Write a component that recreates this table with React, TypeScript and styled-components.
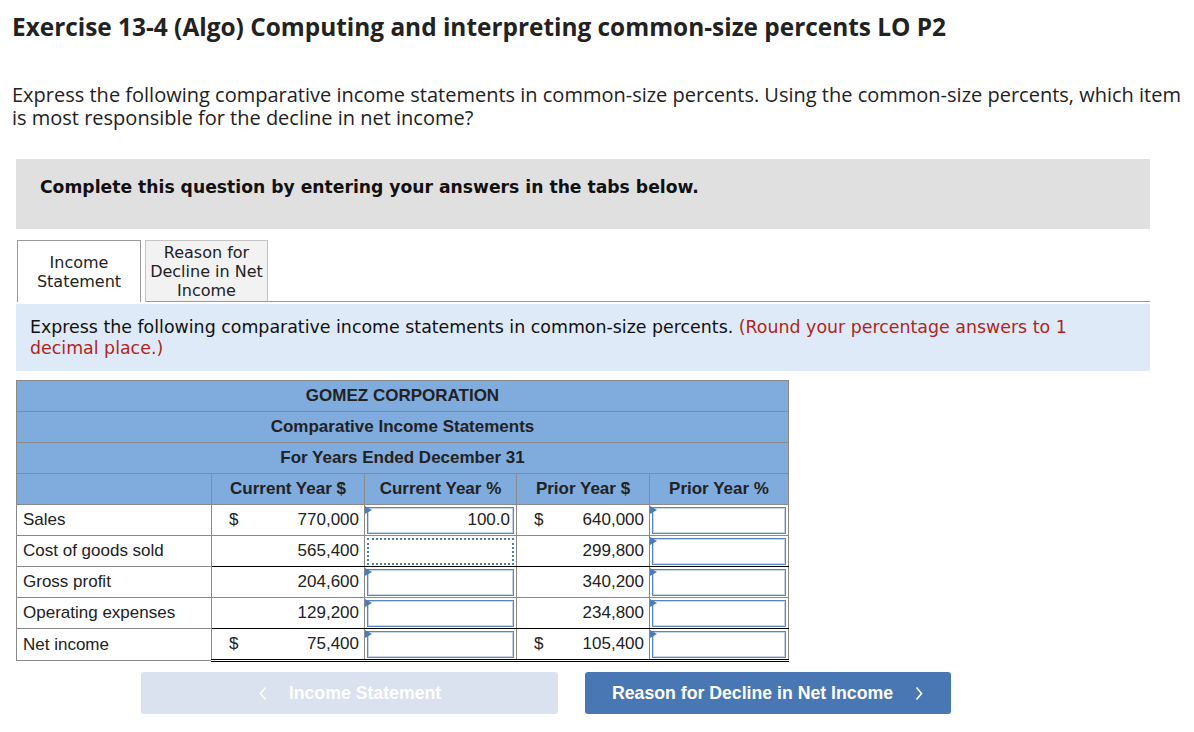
import React from "react";
import styled, { createGlobalStyle } from "styled-components";

const Global = createGlobalStyle`
  html, body { margin: 0; padding: 0; background: #fff; }
  body { font-family: "Liberation Sans", Arial, sans-serif; color: #222; }
`;

const Page = styled.div`
  width: 1194px;
  padding: 0 0 20px 0;
`;

const Title = styled.h1`
  margin: 0;
  padding: 12px 0 0 12px;
  font-family: "Open Sans", "Lato", sans-serif;
  font-weight: 700;
  font-size: 24.4px;
  line-height: 30px;
  color: #222;
`;

const Intro = styled.p`
  margin: 41px 0 0 0;
  padding: 0 4px 0 12px;
  font-family: "Open Sans", "Lato", sans-serif;
  font-size: 20px;
  line-height: 23px;
  color: #222;
`;

const Body = styled.div`
  padding: 0 44px 0 16px;
`;

const Notice = styled.div`
  margin-top: 30px;
  height: 70px;
  background: #e0e0e0;
  display: flex;
  align-items: center;
  padding: 0 24px 14px 24px;
  font-family: "DejaVu Sans", Verdana, sans-serif;
  font-weight: 700;
  font-size: 17.2px;
  color: #111;
  box-sizing: border-box;
`;

const TabBar = styled.div`
  display: flex;
  align-items: flex-end;
  margin-top: 11px;
  gap: 4px;
`;

const Tab = styled.div<{ $active?: boolean }>`
  width: ${(p) => (p.$active ? 124 : 123)}px;
  height: 62px;
  box-sizing: border-box;
  display: flex;
  align-items: center;
  justify-content: center;
  text-align: center;
  font-family: "DejaVu Sans", Verdana, sans-serif;
  font-size: 16px;
  line-height: 19px;
  color: #222;
  margin-left: ${(p) => (p.$active ? 1 : 0)}px;
  background: ${(p) => (p.$active ? "#fff" : "#f2f2f2")};
  border: 1px solid ${(p) => (p.$active ? "#9a9a9a" : "#c4c4c4")};
  border-bottom: ${(p) => (p.$active ? "none" : "1px solid #9a9a9a")};
`;

const TabFill = styled.div`
  flex: 1;
  border-bottom: 1px solid #9a9a9a;
  margin-left: -4px;
`;

const Instruction = styled.div`
  margin-top: 2px;
  background: #deeaf7;
  padding: 13px 14px 12px 14px;
  font-family: "DejaVu Sans", Verdana, sans-serif;
  font-size: 17.4px;
  line-height: 21px;
  color: #111;
`;

const Red = styled.span`
  color: #b0251c;
`;

const Table = styled.table`
  margin-top: 9px;
  border-collapse: collapse;
  width: 772px;
  table-layout: fixed;
  font-family: "Liberation Sans", Arial, sans-serif;
  font-size: 17px;
  color: #222;
  border: 1px solid #8a8a8a;
`;

const HeadCell = styled.th`
  background: #7fabdd;
  border: 1px solid #8a8a8a;
  height: 30px;
  padding: 0;
  font-weight: 700;
  text-align: center;
  color: #222;
`;

const LabelCell = styled.td`
  border: 1px solid #8a8a8a;
  height: 30px;
  padding: 0 6px;
  text-align: left;
`;

const ruleBorder = (r?: "single" | "double") =>
  r === "single" ? "1px solid #000" : r === "double" ? "3px double #000" : "1px solid #8a8a8a";

const AmountCell = styled.td<{ $rule?: "single" | "double" }>`
  border: 1px solid #8a8a8a;
  border-bottom: ${(p) => ruleBorder(p.$rule)};
  height: 30px;
  padding: 0 5px 0 17px;
`;

const Amount = styled.div`
  display: flex;
  justify-content: space-between;
  align-items: center;
`;

const InputCell = styled.td<{ $rule?: "single" | "double" }>`
  border: 1px solid #8a8a8a;
  border-bottom: ${(p) => ruleBorder(p.$rule)};
  height: 30px;
  padding: 0 2px;
  position: relative;
`;

const InputBox = styled.div<{ $focused?: boolean }>`
  height: 27px;
  box-sizing: border-box;
  background: #fff;
  border: ${(p) => (p.$focused ? "2px dotted #4a7cbc" : "1px solid #5a86c0")};
  box-shadow: ${(p) => (p.$focused ? "none" : "inset 0 0 0 1px #c9d6e8")};
  display: flex;
  align-items: center;
  justify-content: flex-end;
  padding-right: 3px;
  color: #222;
`;

const Flag = styled.span`
  position: absolute;
  left: 0;
  top: 1px;
  width: 0;
  height: 0;
  border-top: 4.5px solid transparent;
  border-bottom: 4.5px solid transparent;
  border-left: 7px solid #4a7cbc;
`;

const Nav = styled.div`
  display: flex;
  gap: 27px;
  padding-left: 141px;
  margin-top: 10px;
`;

const NavButton = styled.div<{ $primary?: boolean; $w: number }>`
  width: ${(p) => p.$w}px;
  height: 42px;
  border-radius: 3px;
  background: ${(p) => (p.$primary ? "#4977b4" : "#d9e2ee")};
  color: #fff;
  display: flex;
  align-items: center;
  justify-content: center;
  gap: 21px;
  font-family: "Liberation Sans", Arial, sans-serif;
  font-weight: 700;
  font-size: 17.7px;
`;

const Chevron = styled.svg`
  width: 10px;
  height: 15px;
`;

type Rule = "single" | "double" | undefined;

interface Row {
  label: string;
  cur: string;
  prior: string;
  dollar?: boolean;
  curPct?: string;
  focused?: boolean;
  rule?: Rule;
}

const rows: Row[] = [
  { label: "Sales", cur: "770,000", prior: "640,000", dollar: true, curPct: "100.0" },
  { label: "Cost of goods sold", cur: "565,400", prior: "299,800", focused: true, rule: "single" },
  { label: "Gross profit", cur: "204,600", prior: "340,200" },
  { label: "Operating expenses", cur: "129,200", prior: "234,800", rule: "single" },
  { label: "Net income", cur: "75,400", prior: "105,400", dollar: true, rule: "double" },
];

export default function App() {
  return (
    <Page>
      <Global />
      <Title>Exercise 13-4 (Algo) Computing and interpreting common-size percents LO P2</Title>
      <Intro>
        Express the following comparative income statements in common-size percents. Using the common-size percents, which item
        <br />
        is most responsible for the decline in net income?
      </Intro>
      <Body>
        <Notice>Complete this question by entering your answers in the tabs below.</Notice>
        <TabBar>
          <Tab $active>
            Income
            <br />
            Statement
          </Tab>
          <Tab>
            Reason for
            <br />
            Decline in Net
            <br />
            Income
          </Tab>
          <TabFill />
        </TabBar>
        <Instruction>
          Express the following comparative income statements in common-size percents.{" "}
          <Red>(Round your percentage answers to 1</Red>
          <br />
          <Red>decimal place.)</Red>
        </Instruction>
        <Table>
          <colgroup>
            <col style={{ width: 195 }} />
            <col style={{ width: 153 }} />
            <col style={{ width: 152 }} />
            <col style={{ width: 133 }} />
            <col style={{ width: 139 }} />
          </colgroup>
          <thead>
            <tr>
              <HeadCell colSpan={5}>GOMEZ CORPORATION</HeadCell>
            </tr>
            <tr>
              <HeadCell colSpan={5}>Comparative Income Statements</HeadCell>
            </tr>
            <tr>
              <HeadCell colSpan={5}>For Years Ended December 31</HeadCell>
            </tr>
            <tr>
              <HeadCell />
              <HeadCell>Current Year $</HeadCell>
              <HeadCell>Current Year %</HeadCell>
              <HeadCell>Prior Year $</HeadCell>
              <HeadCell>Prior Year %</HeadCell>
            </tr>
          </thead>
          <tbody>
            {rows.map((r) => (
              <tr key={r.label}>
                <LabelCell>{r.label}</LabelCell>
                <AmountCell $rule={r.rule}>
                  <Amount>
                    <span>{r.dollar ? "$" : ""}</span>
                    <span>{r.cur}</span>
                  </Amount>
                </AmountCell>
                <InputCell $rule={r.rule}>
                  <InputBox $focused={r.focused}>{r.curPct ?? ""}</InputBox>
                  {!r.focused && <Flag />}
                </InputCell>
                <AmountCell $rule={r.rule}>
                  <Amount>
                    <span>{r.dollar ? "$" : ""}</span>
                    <span>{r.prior}</span>
                  </Amount>
                </AmountCell>
                <InputCell $rule={r.rule}>
                  <InputBox />
                  <Flag />
                </InputCell>
              </tr>
            ))}
          </tbody>
        </Table>
      </Body>
      <Nav>
        <NavButton $w={417}>
          <Chevron viewBox="0 0 10 15">
            <path d="M7.5 1.5 L2.5 7.5 L7.5 13.5" fill="none" stroke="#fff" strokeWidth="1.6" />
          </Chevron>
          <span>Income Statement</span>
        </NavButton>
        <NavButton $primary $w={366}>
          <span>Reason for Decline in Net Income</span>
          <Chevron viewBox="0 0 10 15">
            <path d="M2.5 1.5 L7.5 7.5 L2.5 13.5" fill="none" stroke="#fff" strokeWidth="1.6" />
          </Chevron>
        </NavButton>
      </Nav>
    </Page>
  );
}
